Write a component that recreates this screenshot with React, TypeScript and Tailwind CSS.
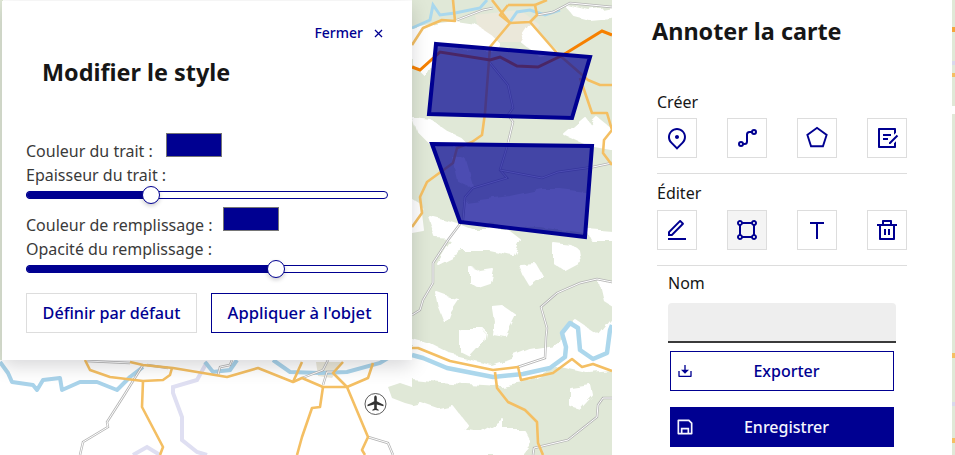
import { ReactNode } from "react"
import {
  RiCloseLine,
  RiDeleteBinLine,
  RiDownload2Line,
  RiDraftLine,
  RiEditLine,
  RiMapPin2Line,
  RiPentagonLine,
  RiSaveLine,
  RiShapeLine,
  RiText,
} from "react-icons/ri"

const whitePatches = [
  "412,30 440,24 455,22 475,25 490,35 500,45 490,50 436,48 425,75 412,62",
  "530,25 557,52 540,56 520,40",
  "567,7 590,12 612,8 612,18 590,20 575,16",
  "413,118 430,120 447,132 460,138 467,145 432,145 417,130",
  "565,135 585,118 590,125 597,118 612,130 612,150 590,146",
  "412,200 420,205 423,230 412,232",
  "430,217 450,222 460,225 477,232 470,240 437,238",
  "465,203 510,197 543,190 560,190 585,193 585,233 540,226 500,225 462,222",
  "453,157 465,160 473,187 458,180",
  "437,263 463,250 490,250 513,255 520,240 507,230 457,230",
  "587,230 612,232 612,240 592,240",
  "470,268 480,272 493,270 490,283 478,287 470,282",
  "437,293 448,297 458,300 450,312 446,323 440,308",
  "492,307 502,306 515,315 505,335 492,333 494,320",
  "460,330 484,330 482,342 470,355 460,350",
  "520,265 535,264 542,276 530,285 524,275",
  "553,243 570,245 578,250 580,262 565,270 553,262",
  "600,283 612,285 612,305 604,300",
  "570,388 590,385 592,395 580,408 570,405",
  "412,340 430,345 450,355 490,365 505,360 530,350 560,345 565,330 575,320 590,330 600,335 612,320 612,370 590,372 560,365 530,380 500,385 450,382 412,378",
  "412,405 420,403 440,410 453,407 467,425 463,430 480,433 503,420 503,430 523,430 530,443 520,455 412,455",
]

const orangeRoads = [
  "85,360 90,370 110,377 143,381 163,380 170,375 172,368",
  "130,362 143,365 173,368 227,377 258,368 293,382 302,378 323,387 347,387 368,378 373,363",
  "143,381 142,407 163,447 160,455",
  "293,382 302,362",
  "323,387 320,407 312,408 302,437 297,455",
  "343,362 333,373 347,387 368,437 362,450 365,455",
  "412,45 423,28 442,20 455,21 453,0",
  "492,0 510,23 530,22 537,15 535,5 547,0",
  "508,5 500,15 510,23",
  "508,5 535,5",
  "510,23 490,47 485,113 482,135 472,142 457,148 453,163 427,182 420,197 422,213 412,227",
  "530,22 557,53 588,80 600,85 612,85",
  "580,78 592,113 607,113 612,130 604,140 603,153 612,165",
  "412,348 418,348 450,361 493,370 518,367 521,380 553,373 572,359 582,367 593,364 612,371",
  "495,372 497,388 508,402 525,410 537,422 538,443 543,455",
]

const greyRoads = [
  "147,365 168,368",
  "143,365 123,397 107,422 108,427 83,442 80,455",
  "87,361 130,363",
  "218,375 220,367 230,365 232,360",
  "302,378 323,370 328,360",
  "323,385 327,372 335,372",
  "368,437 388,443 393,455",
  "457,20 483,10 493,8",
  "537,15 553,12 570,3 612,7",
  "490,63 508,85 513,108 508,115 513,122 507,147 500,170 507,178 473,188 465,197 463,220 448,240 433,263 433,283 423,300 420,310 412,315",
  "500,170 542,178 558,172 593,167 612,163",
  "518,367 545,358 546,337 547,328 541,307 557,293 580,283 597,279 612,282",
  "533,455 534,448 568,440 597,417 598,405 603,398 612,398",
]

const MapBackground = () => (
  <svg className="absolute inset-0" width="955" height="455" viewBox="0 0 955 455">
    <defs>
      <filter id="rough" x="0" y="0" width="100%" height="100%" filterUnits="userSpaceOnUse">
        <feTurbulence type="fractalNoise" baseFrequency="0.07" numOctaves="2" seed="4" />
        <feDisplacementMap in="SourceGraphic" scale="9" />
      </filter>
    </defs>
    <rect width="955" height="455" fill="#ffffff" />
    <rect x="412" width="200" height="455" fill="#e0e8d7" />
    <rect x="952" width="3" height="455" fill="#e0e8d7" />
    <rect x="952" y="106" width="3" height="8" fill="#ffffff" />
    <rect x="952" y="27" width="3" height="5" fill="#f4a53c" />
    <rect x="952" y="61" width="3" height="4" fill="#d8d8ec" />
    <rect x="952" y="73" width="3" height="4" fill="#f4bf63" />
    <rect x="952" y="353" width="3" height="5" fill="#f4bf63" />
    <rect x="952" y="402" width="3" height="4" fill="#d8d8ec" />
    <rect x="952" y="438" width="3" height="5" fill="#f4bf63" />
    <rect x="0" width="3" height="360" fill="#dfe7d6" />
    <polygon points="388,387 400,383 412,387 420,390 420,407 405,403 392,398" fill="#e0e8d7" />
    <polygon points="475,15 520,10 540,25 530,42 500,42 478,28" fill="#ebe8da" />
    <polygon points="316,362 343,362 332,378 318,376" fill="#ebe8da" />
    <g filter="url(#rough)">
      {whitePatches.map((p) => (
        <polygon key={p} points={p} fill="#ffffff" stroke="#ffffff" strokeWidth="2" strokeLinejoin="round" />
      ))}
    </g>
    <polyline
      points="207,362 197,380 173,387 173,393 182,417 182,440 197,452 207,455"
      fill="none"
      stroke="#dfdff2"
      strokeWidth="4"
    />
    <polyline points="133,455 147,447 160,455" fill="none" stroke="#dfdff2" strokeWidth="4" />
    <polyline
      points="0,362 8,373 12,382 33,385 37,390 43,380 60,378 62,390 80,382 97,382 117,390 130,377 143,367"
      fill="none"
      stroke="#a9d3ea"
      strokeWidth="4"
      strokeLinejoin="round"
    />
    <polyline points="205,362 213,372 230,370 237,360" fill="none" stroke="#a9d3ea" strokeWidth="4" />
    <polyline
      points="273,360 290,372 320,373 347,372 380,363 388,358"
      fill="none"
      stroke="#a9d3ea"
      strokeWidth="4"
    />
    <polyline
      points="412,28 430,20 433,5 440,15 455,13 480,8 487,0"
      fill="none"
      stroke="#a9d8ee"
      strokeWidth="3"
    />
    <polyline points="510,22 517,12 530,10 545,15 560,10" fill="none" stroke="#a9d8ee" strokeWidth="3" />
    <polyline
      points="412,355 423,358 447,368 493,377 523,374 550,368 565,357 566,347 562,333 570,323 578,328 580,350 593,359 607,353 610,330 612,325"
      fill="none"
      stroke="#acd7ec"
      strokeWidth="4.5"
      strokeLinejoin="round"
    />
    {greyRoads.map((p) => (
      <g key={p}>
        <polyline points={p} fill="none" stroke="#b4b4b4" strokeWidth="2.4" />
        <polyline points={p} fill="none" stroke="#ffffff" strokeWidth="1" />
      </g>
    ))}
    {orangeRoads.map((p) => (
      <polyline key={p} points={p} fill="none" stroke="#f4bf63" strokeWidth="2.6" strokeLinejoin="round" />
    ))}
    <polyline
      points="412,67 420,70 440,52 490,60 500,57 517,66 538,67 563,55 602,31 612,35"
      fill="none"
      stroke="#f68000"
      strokeWidth="3"
    />
    <polygon points="436,44 590,57 572,118 429,114" fill="#000091" fillOpacity="0.7" stroke="#000091" strokeWidth="4" />
    <polygon points="432,144 592,146 585,237 460,222" fill="#000091" fillOpacity="0.7" stroke="#000091" strokeWidth="4" />
    <circle cx="375.5" cy="404" r="10.5" fill="#ffffff" stroke="#333333" strokeWidth="0.8" />
    <path
      d="M375.5 395.5c.9 0 1.300 1.200 1.300 2.500v3.200l6.700 3.600v1.500l-6.700-1.700v3.800l1.800 1.300v1.100l-3.100-.8-3.100.8v-1.100l1.800-1.300v-3.800l-6.700 1.700v-1.500l6.700-3.600V398c0-1.300.4-2.500 1.300-2.500z"
      fill="#333333"
    />
  </svg>
)

const RouteIcon = () => (
  <svg width="24" height="24" viewBox="0 0 24 24" fill="none" stroke="currentColor" strokeWidth="2">
    <circle cx="6" cy="18" r="2" />
    <circle cx="19" cy="6" r="2" />
    <path d="M8 18h1.500c1.400 0 2.500-1.100 2.500-2.500v-7C12 7.100 13.100 6 14.500 6H17" />
  </svg>
)

const Slider = ({ percent }: { percent: number }) => (
  <div className="relative h-2 w-full rounded-full border border-[#000091] bg-white">
    <div className="h-full rounded-full bg-[#000091] outline-1 outline-[#000091]" style={{ width: `${percent}%` }} />
    <div
      className="absolute top-1/2 h-[18px] w-[18px] -translate-x-1/2 -translate-y-1/2 rounded-full border border-[#000091] bg-white shadow-[0_2px_4px_rgba(0,0,18,0.2)]"
      style={{ left: `${percent}%` }}
    />
  </div>
)

const Swatch = () => <div className="mb-[6px] h-[24px] w-[56px] border border-[#767676] bg-[#000091]" />

const ToolButton = ({ children, active }: { children: ReactNode; active?: boolean }) => (
  <button
    className={`flex h-10 w-10 items-center justify-center border border-[#dddddd] text-[24px] text-[#000091] ${
      active ? "bg-[#f4f4f4]" : "bg-white"
    }`}
  >
    {children}
  </button>
)

const StylePanel = () => (
  <div className="absolute left-[2px] top-[1px] h-[359px] w-[410px] bg-white px-6 shadow-[0_6px_18px_rgba(0,0,18,0.16)]">
    <div className="flex items-center justify-end gap-[8px] pr-[2px] pt-[22px] text-[14px] font-medium leading-5 text-[#000091]">
      <span>Fermer</span>
      <RiCloseLine className="text-[15px]" />
    </div>
    <h2 className="ml-[16px] mt-[13px] text-[23.4px] font-bold leading-8 text-[#161616]">Modifier le style</h2>
    <div className="mt-[45px] flex items-end text-[16px] leading-6 text-[#3a3a3a]">
      <span className="w-[140px]">Couleur du trait :</span>
      <Swatch />
    </div>
    <p className="text-[16px] leading-6 text-[#3a3a3a]">Epaisseur du trait :</p>
    <div className="mt-[4px]">
      <Slider percent={34.5} />
    </div>
    <div className="mt-[8px] flex items-end text-[16px] leading-6 text-[#3a3a3a]">
      <span className="w-[197px]">Couleur de remplissage :</span>
      <Swatch />
    </div>
    <p className="text-[16px] leading-6 text-[#3a3a3a]">Opacité du remplissage :</p>
    <div className="mt-[4px]">
      <Slider percent={69.3} />
    </div>
    <div className="mt-[20px] flex justify-between">
      <button className="h-10 w-[171px] border border-[#dddddd] text-[16.2px] font-medium text-[#000091]">
        Définir par défaut
      </button>
      <button className="h-10 w-[177px] border border-[#000091] text-[16.6px] font-medium text-[#000091]">
        Appliquer à l'objet
      </button>
    </div>
  </div>
)

const Sidebar = () => (
  <aside className="relative ml-[612px] h-[455px] w-[340px] bg-white pl-[40px] pt-[15px]">
    <h2 className="text-[23.4px] font-bold leading-8 text-[#161616]">Annoter la carte</h2>
    <div className="ml-[5px] w-[250px]">
      <p className="mt-[43px] text-[16px] leading-6 text-[#161616]">Créer</p>
      <div className="mt-[4px] flex justify-between">
        <ToolButton><RiMapPin2Line /></ToolButton>
        <ToolButton><RouteIcon /></ToolButton>
        <ToolButton><RiPentagonLine /></ToolButton>
        <ToolButton><RiDraftLine /></ToolButton>
      </div>
      <div className="mt-[15px] border-t border-[#dddddd]" />
      <p className="mt-[7px] text-[16px] leading-6 text-[#161616]">Éditer</p>
      <div className="mt-[5px] flex justify-between">
        <ToolButton><RiEditLine /></ToolButton>
        <ToolButton active><RiShapeLine /></ToolButton>
        <ToolButton><RiText /></ToolButton>
        <ToolButton><RiDeleteBinLine /></ToolButton>
      </div>
      <div className="mt-[15px] border-t border-[#dddddd]" />
      <div className="ml-[11px] w-[228px]">
        <p className="mt-[5px] text-[16px] leading-6 text-[#161616]">Nom</p>
        <div className="mt-[8px] h-10 rounded-t-[4px] border-b-2 border-[#3a3a3a] bg-[#eeeeee]" />
        <div className="ml-[2px] w-[224px]">
          <button className="relative mt-[8px] flex h-10 w-full items-center justify-center border border-[#000091] pl-[9px] text-[16px] font-medium text-[#000091]">
            <RiDownload2Line className="absolute left-[6px] text-[16px]" />
            Exporter
          </button>
          <button className="relative mt-[16px] flex h-10 w-full items-center justify-center bg-[#000091] pl-[9px] text-[16px] font-medium text-[#f5f5fe]">
            <RiSaveLine className="absolute left-[5px] text-[20px]" />
            Enregistrer
          </button>
        </div>
      </div>
    </div>
  </aside>
)

export default function App() {
  return (
    <div className="relative h-[455px] w-[955px] overflow-hidden font-['Noto_Sans',sans-serif]">
      <MapBackground />
      <StylePanel />
      <Sidebar />
    </div>
  )
}
